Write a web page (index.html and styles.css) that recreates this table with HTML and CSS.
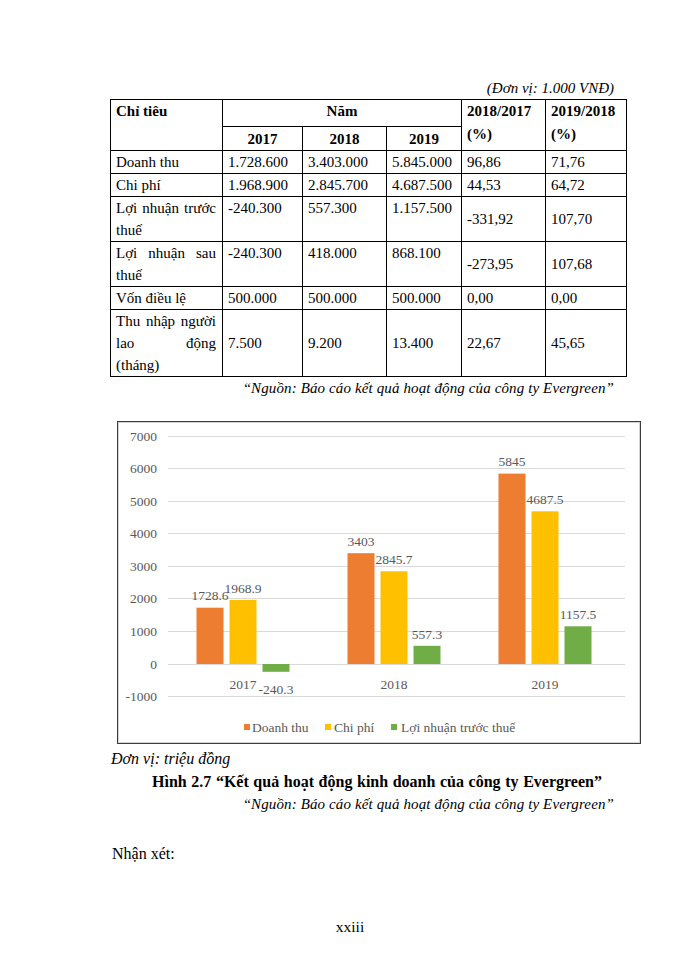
FILE: index.html
```html
<!DOCTYPE html>
<html lang="vi">
<head>
<meta charset="utf-8">
<title>Kết quả hoạt động kinh doanh</title>
<link rel="stylesheet" href="styles.css">
</head>
<body>
<div class="page">
  <div class="content">
    <p class="unit">(Đơn vị: 1.000 VNĐ)</p>
    <table class="data">
      <colgroup>
        <col class="c0"><col class="c1"><col class="c2"><col class="c3"><col class="c4"><col class="c5">
      </colgroup>
      <thead>
        <tr class="h1">
          <th rowspan="2" class="tl">Chỉ tiêu</th>
          <th colspan="3" class="tc">Năm</th>
          <th rowspan="2" class="tl pct">2018/2017<br>(%)</th>
          <th rowspan="2" class="tl pct">2019/2018<br>(%)</th>
        </tr>
        <tr class="h2">
          <th class="tc">2017</th>
          <th class="tc">2018</th>
          <th class="tc">2019</th>
        </tr>
      </thead>
      <tbody>
        <tr>
          <td class="name">Doanh thu</td>
          <td>1.728.600</td><td>3.403.000</td><td>5.845.000</td><td>96,86</td><td>71,76</td>
        </tr>
        <tr>
          <td class="name">Chi phí</td>
          <td>1.968.900</td><td>2.845.700</td><td>4.687.500</td><td>44,53</td><td>64,72</td>
        </tr>
        <tr>
          <td class="name">Lợi nhuận trước thuế</td>
          <td>-240.300</td><td>557.300</td><td>1.157.500</td><td class="mid">-331,92</td><td class="mid">107,70</td>
        </tr>
        <tr>
          <td class="name">Lợi nhuận sau thuế</td>
          <td>-240.300</td><td>418.000</td><td>868.100</td><td class="mid">-273,95</td><td class="mid">107,68</td>
        </tr>
        <tr>
          <td class="name">Vốn điều lệ</td>
          <td>500.000</td><td>500.000</td><td>500.000</td><td>0,00</td><td>0,00</td>
        </tr>
        <tr>
          <td class="name name-last">Thu nhập người lao động<br>(tháng)</td>
          <td class="mid">7.500</td><td class="mid">9.200</td><td class="mid">13.400</td><td class="mid">22,67</td><td class="mid">45,65</td>
        </tr>
      </tbody>
    </table>
    <p class="source">“Nguồn: Báo cáo kết quả hoạt động của công ty Evergreen”</p>

    <div class="chart">
      <svg class="chart-svg" width="522" height="321" viewBox="0 0 522 321" xmlns="http://www.w3.org/2000/svg">
        <g class="grid" stroke="#d9d9d9" stroke-width="1">
          <line x1="50" y1="14.5" x2="507" y2="14.5"/>
          <line x1="50" y1="46.5" x2="507" y2="46.5"/>
          <line x1="50" y1="79.5" x2="507" y2="79.5"/>
          <line x1="50" y1="111.5" x2="507" y2="111.5"/>
          <line x1="50" y1="144.5" x2="507" y2="144.5"/>
          <line x1="50" y1="176.5" x2="507" y2="176.5"/>
          <line x1="50" y1="209.5" x2="507" y2="209.5"/>
          <line x1="50" y1="242.5" x2="507" y2="242.5"/>
          <line x1="50" y1="274.5" x2="507" y2="274.5"/>
        </g>
        <g class="axis" text-anchor="end">
          <text x="39" y="19">7000</text>
          <text x="39" y="51">6000</text>
          <text x="39" y="84">5000</text>
          <text x="39" y="116">4000</text>
          <text x="39" y="149">3000</text>
          <text x="39" y="181">2000</text>
          <text x="39" y="214">1000</text>
          <text x="39" y="247">0</text>
          <text x="39" y="279">-1000</text>
        </g>
        <g class="bars">
          <rect x="78.5" y="185.7" width="27" height="56.3" fill="#ed7d31"/>
          <rect x="111.5" y="177.9" width="27" height="64.1" fill="#ffc000"/>
          <rect x="144.5" y="242" width="27" height="7.8" fill="#70ad47"/>
          <rect x="229.5" y="131.2" width="27" height="110.8" fill="#ed7d31"/>
          <rect x="262.5" y="149.3" width="27" height="92.7" fill="#ffc000"/>
          <rect x="295.5" y="223.8" width="27" height="18.2" fill="#70ad47"/>
          <rect x="380.5" y="51.6" width="27" height="190.4" fill="#ed7d31"/>
          <rect x="413.5" y="89.3" width="27" height="152.7" fill="#ffc000"/>
          <rect x="446.5" y="204.3" width="27" height="37.7" fill="#70ad47"/>
        </g>
        <g class="labels" text-anchor="middle">
          <text x="92" y="178">1728.6</text>
          <text x="125" y="170.5">1968.9</text>
          <text x="158" y="271.5">-240.3</text>
          <text x="243" y="124">3403</text>
          <text x="276" y="142">2845.7</text>
          <text x="309" y="216.5">557.3</text>
          <text x="394" y="44">5845</text>
          <text x="427" y="82">4687.5</text>
          <text x="460" y="197">1157.5</text>
        </g>
        <g class="cats" text-anchor="middle">
          <text x="125" y="266.5">2017</text>
          <text x="276" y="266.5">2018</text>
          <text x="427" y="266.5">2019</text>
        </g>
        <g class="legend">
          <rect x="126" y="302" width="6" height="6" fill="#ed7d31"/>
          <text x="134" y="309.5">Doanh thu</text>
          <rect x="207" y="302" width="6" height="6" fill="#ffc000"/>
          <text x="216" y="309.5">Chi phí</text>
          <rect x="273" y="302" width="6" height="6" fill="#70ad47"/>
          <text x="283" y="309.5">Lợi nhuận trước thuế</text>
        </g>
      </svg>
    </div>

    <p class="note-unit">Đơn vị: triệu đồng</p>
    <p class="caption">Hình 2.7 “Kết quả hoạt động kinh doanh của công ty Evergreen”</p>
    <p class="source">“Nguồn: Báo cáo kết quả hoạt động của công ty Evergreen”</p>
    <p class="remark">Nhận xét:</p>
  </div>
  <p class="pagenum">xxiii</p>
</div>
</body>
</html>
```

FILE: styles.css
```css
html, body {
  margin: 0;
  padding: 0;
  background: #ffffff;
}

body {
  font-family: "Liberation Serif", "Times New Roman", serif;
  font-size: 15px;
  color: #000000;
}

.page {
  width: 700px;
  height: 960px;
  padding-top: 77px;
  box-sizing: border-box;
}

.content {
  margin-left: 110px;
  width: 516px;
}

p {
  margin: 0;
  line-height: 22px;
}

.unit {
  text-align: right;
  font-style: italic;
  padding-right: 12px;
}

.data {
  border-collapse: collapse;
  table-layout: fixed;
  width: 516px;
  line-height: 22px;
}

.c0 { width: 112px; }
.c1 { width: 80px; }
.c2 { width: 84px; }
.c3 { width: 75px; }
.c4 { width: 84px; }
.c5 { width: 81px; }

.data th,
.data td {
  border: 1px solid #000000;
  padding: 0 5px;
  vertical-align: top;
  text-align: left;
  font-weight: normal;
}

.data th {
  font-weight: bold;
}

.data th.tc {
  text-align: center;
}

.data th.pct {
  line-height: 23px;
}

.h1 th {
  height: 26px;
}

.h2 th {
  height: 23px;
  vertical-align: middle;
}

.data td.name {
  text-align: justify;
  padding-right: 6px;
}

.data td.name-last {
  text-align-last: justify;
}

.data td.mid {
  vertical-align: middle;
}

.source {
  text-align: right;
  font-style: italic;
  padding-right: 12px;
  letter-spacing: 0.12px;
}

.chart {
  margin: 22px 0 0 7px;
  width: 522px;
  height: 321px;
  border: 1px solid #3c3c3c;
  box-shadow: inset 0 0 0 1px #d4d4d4;
}

.chart-svg {
  display: block;
  font-family: "Liberation Serif", "Times New Roman", serif;
  font-size: 13.5px;
  fill: #595959;
}

.chart-svg text {
  fill: #595959;
}

.note-unit {
  margin-top: 3px;
  padding-left: 1px;
  font-style: italic;
  font-size: 16px;
  line-height: 23px;
}

.caption {
  margin-top: 1px;
  font-weight: bold;
  font-size: 16px;
  word-spacing: 0.6px;
  padding-left: 42px;
}

.remark {
  margin-top: 28px;
  padding-left: 2px;
  font-size: 16px;
}

.pagenum {
  margin-top: 51px;
  text-align: center;
  font-size: 15.5px;
}
```
